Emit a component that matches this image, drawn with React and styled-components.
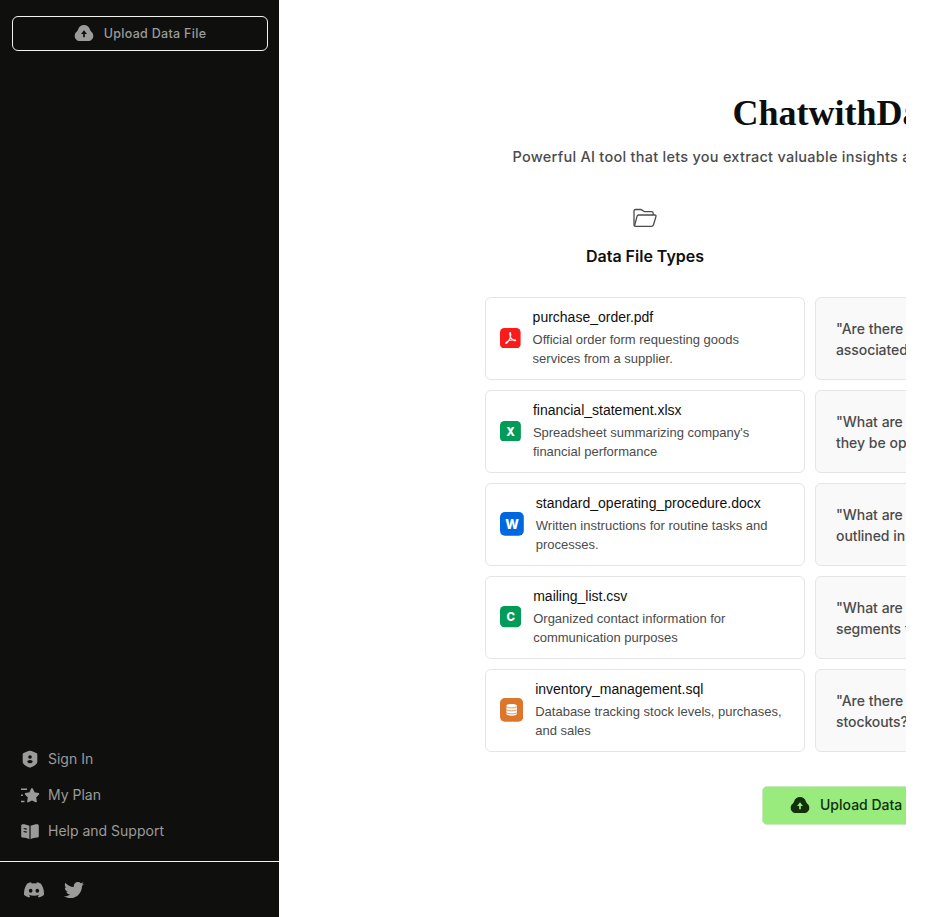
import React from "react";
import styled, { createGlobalStyle } from "styled-components";
import { FaTwitter } from "react-icons/fa";
import { BsDiscord } from "react-icons/bs";

const GlobalStyle = createGlobalStyle`
  * { box-sizing: border-box; }
  body { margin: 0; background: #fff; overflow: hidden; }
  h1, h2, p { margin: 0; }
  button { font: inherit; }
  svg { display: block; flex: none; }
`;

const Page = styled.div`
  display: flex;
  width: 936px;
  height: 917px;
  font-family: Inter, sans-serif;
`;

const Sidebar = styled.aside`
  display: flex;
  flex-direction: column;
  flex: none;
  width: 279px;
  background: #0f0f0d;
  color: #9b9b9b;
`;

const SidebarUpload = styled.button`
  display: flex;
  align-items: center;
  justify-content: center;
  gap: 10px;
  width: 256px;
  height: 35px;
  margin: 16px 0 0 12px;
  padding: 0 0 1px;
  border: 1px solid #f2f2ee;
  border-radius: 6px;
  background: transparent;
  color: #9b9b9b;
  font-size: 12.5px;
  font-weight: 500;
  letter-spacing: 0.3px;
`;

const Nav = styled.nav`
  display: flex;
  flex-direction: column;
  margin-top: auto;
  padding: 0 20px 12px;
`;

const NavItem = styled.a`
  display: flex;
  align-items: center;
  gap: 8px;
  height: 36px;
  padding-bottom: 1px;
  font-size: 14px;
`;

const Social = styled.footer`
  display: flex;
  align-items: center;
  gap: 20px;
  height: 56px;
  padding-left: 24px;
  border-top: 1px solid #eef3ee;
`;

const Main = styled.main`
  flex: none;
  width: 627px;
  overflow: hidden;
  padding: 89px 0 0 206px;
`;

const Content = styled.div`
  display: flex;
  flex-direction: column;
  align-items: flex-start;
  width: 650px;
`;

const Title = styled.h1`
  height: 48px;
  margin-left: 247.5px;
  font: 700 36px/48px "Liberation Serif", serif;
  color: #0d0d0d;
  white-space: nowrap;
`;

const Tagline = styled.p`
  margin: 9px 0 0 27.5px;
  font-size: 14.5px;
  line-height: 22px;
  font-weight: 500;
  letter-spacing: 0.26px;
  color: #4b4b4b;
  white-space: nowrap;
`;

const Columns = styled.div`
  display: grid;
  grid-template-columns: 320px 320px;
  gap: 10px;
  margin-top: 40px;
`;

const ColumnHead = styled.div`
  display: flex;
  flex-direction: column;
  align-items: center;
  gap: 16px;
  height: 79px;
`;

const ColumnTitle = styled.h2`
  font-size: 16px;
  line-height: 24px;
  font-weight: 600;
  color: #0f0f0f;
`;

const FileCard = styled.article`
  display: flex;
  align-items: center;
  gap: 12px;
  height: 83px;
  padding: 0 14px 1px;
  border: 1px solid #e5e5e5;
  border-radius: 6px;
  background: #fff;
  font-family: "Liberation Sans", sans-serif;
`;

const FileText = styled.div`
  padding-bottom: 3px;
`;

const FileName = styled.p`
  font-size: 14px;
  line-height: 24px;
  padding-bottom: 1px;
  color: #0f0f0f;
`;

const FileInfo = styled.p`
  font-size: 13px;
  line-height: 19px;
  color: #4b4b4b;
  white-space: pre-line;
`;

const Question = styled.article`
  display: flex;
  align-items: center;
  height: 83px;
  padding: 0 20px;
  border: 1px solid #e5e5e5;
  border-radius: 6px;
  background: #f9f9f9;
  color: #4b4b4b;
  font-size: 14px;
  line-height: 21px;
  font-weight: 500;
  letter-spacing: -0.08px;
  word-spacing: 0.3px;
  white-space: pre;
`;

const MainUpload = styled.button`
  display: flex;
  align-items: center;
  gap: 10px;
  width: 194px;
  height: 39px;
  margin: 34px 0 0 277px;
  padding: 0 0 2px 27px;
  border: 1px solid #c9e9be;
  border-radius: 5px;
  background: #98eb7c;
  color: #12300a;
  font-size: 14px;
  font-weight: 500;
  white-space: nowrap;
`;

const CloudIcon = ({ arrow }) => (
  <svg width="20" height="20" viewBox="0 0 20 20">
    <path fill="currentColor" d="M10 2c3 0 5 1.700 5.900 4.400.4 1.100.9 1.700 1.700 2.500 1.200 1.100 1.700 2.300 1.700 3.800 0 3.200-2.200 5.300-5.300 5.300H6C2.900 18 .7 15.900.7 12.700c0-1.500.5-2.700 1.700-3.800.8-.8 1.300-1.400 1.700-2.500C5 3.700 7 2 10 2z" />
    <path d="M10 14.200V9" fill="none" stroke={arrow} strokeWidth="1.700" />
    <path d="M10 7.300 13 11H7z" fill={arrow} />
  </svg>
);

const ShieldIcon = () => (
  <svg width="20" height="20" viewBox="0 0 20 20">
    <path fill="currentColor" d="M10 1.800c1.200 0 5.200 1.600 6.300 2.300.8.500 1 .9 1 1.800v7c0 2.800-5.700 5.600-7.300 5.600s-7.300-2.800-7.300-5.600v-7c0-.9.200-1.300 1-1.800C4.800 3.400 8.800 1.800 10 1.800z" />
    <circle cx="10" cy="8" r="1.800" fill="#0f0f0d" />
    <ellipse cx="10" cy="12.600" rx="2.700" ry="1.700" fill="#0f0f0d" />
  </svg>
);

const PlanIcon = () => (
  <svg width="20" height="20" viewBox="0 0 20 20">
    <path fill="currentColor" d="m12 4 2.100 4.100 4.300.8-3.100 3.200.7 4.400-4-2-4 2 .7-4.400-3.100-3.200 4.300-.8z" stroke="currentColor" strokeWidth="1.700" strokeLinejoin="round" />
    <path d="M1 4.200h6M1 10.300h1.800M1 16.500h3.500" stroke="currentColor" strokeWidth="1.400" />
  </svg>
);

const BookIcon = () => (
  <svg width="20" height="20" viewBox="0 0 20 20">
    <path fill="currentColor" d="M2.700 3.200c2.200 0 4.700.5 6.700 1.600v13.400c-1.900-1-4.200-1.500-6.500-1.600-1-.1-1.700-.7-1.700-1.700V4.700c0-.9.600-1.500 1.500-1.500zM17.300 3.200c-2.200 0-4.700.5-6.700 1.600v13.400c1.900-1 4.200-1.500 6.500-1.600 1-.1 1.700-.7 1.700-1.700V4.700c0-.9-.6-1.500-1.500-1.500z" />
    <path d="m3.600 7.500 3.200.7M3.600 10.500l3.200.7" stroke="#0f0f0d" strokeWidth="1.200" />
  </svg>
);

const FolderIcon = () => (
  <svg width="24" height="20" viewBox="0 0 24 20" fill="none" stroke="#4b4b4b" strokeWidth="1.300" strokeLinejoin="round">
    <path d="M2 18.200Q1 18 1 17V3Q1 1.500 2.500 1.500h5.200q.9 0 1.600.7l1 .8q.7.600 1.600.600h6.600Q20.200 3.600 20.200 5.300V7" />
    <path d="M5.500 7h16.200q1.700 0 1.200 1.700l-2.400 8q-.5 1.700-2.200 1.700H2.600q-1.200 0-.8-1.500l2.200-8.600Q4.400 7 5.500 7z" />
  </svg>
);

const BadgeLetter = styled.text`
  fill: #fff;
  font: 800 13px Inter, sans-serif;
  text-anchor: middle;
`;

const Badge = ({ size, height, fill, children }) => (
  <svg width={size} height={height} viewBox="0 0 24 24" preserveAspectRatio="none">
    <rect width="24" height="24" rx="5" fill={fill} />
    {children}
  </svg>
);

const letter = (c) => <BadgeLetter x="12.200" y="16.700">{c}</BadgeLetter>;

const files = [
  {
    name: "purchase_order.pdf", info: "Official order form requesting goods\nservices from a supplier.",
    q: '"Are there any discounts\nassociated with this order?"', w: 20.6, h: 20.6, fill: "#fc1b1b",
    mark: <path d="M11.800 5.300c1.100.1.900 3.100.2 5.500-1 3.300-3.700 7.300-5.100 7.300-1.300-.2 1.300-2.900 4.500-3.800 3.200-1 7-.9 7 .2-.1 1.200-4-.3-5.700-3-1.300-2-1.900-6.200-.9-6.200z" fill="none" stroke="#fff" strokeWidth="1.200" />,
  },
  {
    name: "financial_statement.xlsx", info: "Spreadsheet summarizing company's\nfinancial performance",
    q: '"What are the costs and can\nthey be optimized?"', w: 20.9, h: 20.9, fill: "#009b58", mark: letter("X"),
  },
  {
    name: "standard_operating_procedure.docx", info: "Written instructions for routine tasks and\nprocesses.",
    q: '"What are the key steps\noutlined in the procedure?"', w: 23.8, h: 23.8, fill: "#0068de", mark: letter("W"),
  },
  {
    name: "mailing_list.csv", info: "Organized contact information for\ncommunication purposes",
    q: '"What are the customer\nsegments to focus on?"', w: 21.2, h: 21.2, fill: "#009b58", mark: letter("C"),
  },
  {
    name: "inventory_management.sql", info: "Database tracking stock levels, purchases,\nand sales",
    q: '"Are there any potential\nstockouts?"', w: 23.2, h: 23.8, fill: "#dc762c",
    mark: (
      <>
        <path d="M6.600 8c0-2.600 11-2.600 11 0v8c0 2.600-11 2.600-11 0z" fill="#fff" />
        <path d="M6.500 8.700c1.500 1.700 9.600 1.700 11.200 0M6.500 11.700c1.500 1.700 9.600 1.700 11.200 0M6.500 14.700c1.500 1.700 9.600 1.700 11.200 0" fill="none" stroke="#dc762c" strokeWidth=".8" />
      </>
    ),
  },
];

export default function App() {
  return (
    <Page>
      <GlobalStyle />
      <Sidebar>
        <SidebarUpload><CloudIcon arrow="#0f0f0d" />Upload Data File</SidebarUpload>
        <Nav>
          <NavItem><ShieldIcon />Sign In</NavItem>
          <NavItem><PlanIcon />My Plan</NavItem>
          <NavItem><BookIcon />Help and Support</NavItem>
        </Nav>
        <Social><BsDiscord size={20} /><FaTwitter size={20} /></Social>
      </Sidebar>
      <Main>
        <Content>
          <Title>ChatwithData</Title>
          <Tagline>Powerful AI tool that lets you extract valuable insights and answers from your data</Tagline>
          <Columns>
            <ColumnHead><FolderIcon /><ColumnTitle>Data File Types</ColumnTitle></ColumnHead>
            <ColumnHead />
            {files.map((f) => (
              <React.Fragment key={f.name}>
                <FileCard>
                  <Badge size={f.w} height={f.h} fill={f.fill}>{f.mark}</Badge>
                  <FileText>
                    <FileName>{f.name}</FileName>
                    <FileInfo>{f.info}</FileInfo>
                  </FileText>
                </FileCard>
                <Question>{f.q}</Question>
              </React.Fragment>
            ))}
          </Columns>
          <MainUpload><CloudIcon arrow="#98eb7c" />Upload Data File</MainUpload>
        </Content>
      </Main>
    </Page>
  );
}
